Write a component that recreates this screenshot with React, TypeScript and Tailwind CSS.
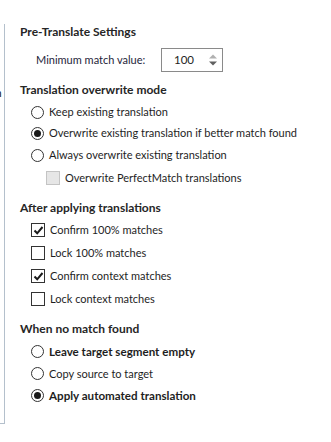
import React from "react";

const font = { fontFamily: 'Lato, "Noto Sans", sans-serif' };

function Radio({ checked, label, bold }: { checked?: boolean; label: string; bold?: boolean }) {
  return (
    <div className="flex items-center h-[21.5px] pl-[11px] whitespace-nowrap">
      <span className="w-[13px] h-[13px] rounded-full border border-[#333333] flex items-center justify-center shrink-0 bg-white">
        {checked && <span className="w-[7px] h-[7px] rounded-full bg-[#1a1a1a]" />}
      </span>
      <span className={`ml-[5px] text-[#1e1e1e] ${bold ? "font-bold text-[11.6px]" : "text-[11px]"}`}>{label}</span>
    </div>
  );
}

function Check({ checked, label }: { checked?: boolean; label: string }) {
  return (
    <div className="flex items-center h-[23px] pl-[11px] whitespace-nowrap">
      <span className="w-[14px] h-[14px] border border-[#333333] flex items-center justify-center shrink-0 bg-white">
        {checked && (
          <svg width="11" height="11" viewBox="0 0 11 11">
            <path d="M1.5 5.5 L4.2 8.3 L9.5 2" fill="none" stroke="#1a1a1a" strokeWidth="2" />
          </svg>
        )}
      </span>
      <span className="ml-[5px] text-[11px] text-[#1e1e1e]">{label}</span>
    </div>
  );
}

function Heading({ children, className = "" }: { children: React.ReactNode; className?: string }) {
  return (
    <div className={`h-[20px] flex items-center text-[12px] font-bold text-[#262626] whitespace-nowrap ${className}`}>{children}</div>
  );
}

export default function App() {
  return (
    <div className="w-[331px] h-[442px] bg-white flex overflow-hidden" style={font}>
      <div className="relative w-[5px] shrink-0 mt-[24px] h-[400px] border-r border-b border-[#b4c0cc]">
        <span className="absolute left-[-5px] top-[63px] text-[12px] text-[#1e1e1e] leading-none">n</span>
      </div>
      <div className="flex flex-col pl-[15px] pt-[22px]">
        <Heading>Pre-Translate Settings</Heading>
        <div className="flex items-center h-[24px] mt-[6px]">
          <span className="ml-[16px] w-[125px] text-[11px] text-[#1e1e3a] whitespace-nowrap">Minimum match value:</span>
          <div className="w-[62px] h-[24px] border border-[#8a8a8a] flex items-center">
            <span className="ml-[12px] text-[11.5px] text-[#1e1e1e]">100</span>
            <svg className="ml-[15px]" width="8" height="12" viewBox="0 0 8 12">
              <path d="M0 4.5 L4 0.5 L8 4.5 Z" fill="#b0b0b0" />
              <path d="M0 7.5 L8 7.5 L4 11.5 Z" fill="#606060" />
            </svg>
          </div>
        </div>
        <Heading className="mt-[8px]">Translation overwrite mode</Heading>
        <div className="mt-[1.25px]">
          <Radio label="Keep existing translation" />
          <Radio checked label="Overwrite existing translation if better match found" />
          <Radio label="Always overwrite existing translation" />
        </div>
        <div className="flex items-center h-[24px] pl-[26px] whitespace-nowrap">
          <span className="w-[14px] h-[14px] border border-[#c4c4c4] bg-[#e6e6e6] shrink-0" />
          <span className="ml-[5px] text-[11px] text-[#1e1e1e]">Overwrite PerfectMatch translations</span>
        </div>
        <Heading className="mt-[8px]">After applying translations</Heading>
        <div className="mt-[1px]">
          <Check checked label="Confirm 100% matches" />
          <Check label="Lock 100% matches" />
          <Check checked label="Confirm context matches" />
          <Check label="Lock context matches" />
        </div>
        <Heading className="mt-[8px]">When no match found</Heading>
        <div className="mt-[2px]">
          <div className="h-[22px] flex flex-col justify-center"><Radio bold label="Leave target segment empty" /></div>
          <div className="h-[22px] flex flex-col justify-center"><Radio label="Copy source to target" /></div>
          <div className="h-[22px] flex flex-col justify-center"><Radio checked bold label="Apply automated translation" /></div>
        </div>
      </div>
    </div>
  );
}
